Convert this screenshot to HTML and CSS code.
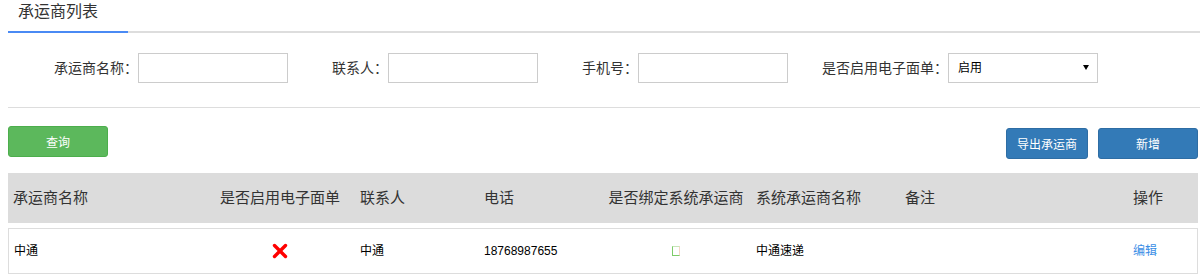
FILE: index.html
```html
<!DOCTYPE html>
<html lang="zh-CN">
<head>
<meta charset="utf-8">
<title>承运商列表</title>
<link rel="stylesheet" href="styles.css">
</head>
<body>
<div class="page">
  <div class="tabs">
    <div class="tab-active">承运商列表</div>
  </div>

  <form class="filters">
    <label class="field-label w130">承运商名称：</label>
    <input class="field-input" type="text">
    <label class="field-label w100">联系人：</label>
    <input class="field-input" type="text">
    <label class="field-label w100">手机号：</label>
    <input class="field-input" type="text">
    <label class="field-label w160">是否启用电子面单：</label>
    <div class="select-box">
      <span class="select-text">启用</span>
      <svg class="select-arrow" width="6" height="5" viewBox="0 0 6 5"><path d="M0 0H6L3 5Z" fill="#000"/></svg>
    </div>
  </form>

  <div class="divider"></div>

  <div class="toolbar">
    <button class="btn btn-green" type="button">查询</button>
    <div class="toolbar-right">
      <button class="btn btn-blue btn-export" type="button">导出承运商</button>
      <button class="btn btn-blue btn-add" type="button">新增</button>
    </div>
  </div>

  <div class="grid-table">
    <div class="grid-row grid-head">
      <div class="cell">承运商名称</div>
      <div class="cell center">是否启用电子面单</div>
      <div class="cell">联系人</div>
      <div class="cell">电话</div>
      <div class="cell center">是否绑定系统承运商</div>
      <div class="cell">系统承运商名称</div>
      <div class="cell">备注</div>
      <div class="cell">操作</div>
    </div>
    <div class="grid-row grid-body">
      <div class="cell">中通</div>
      <div class="cell center">
        <svg class="icon-x" width="16" height="16" viewBox="0 0 16 16"><path d="M2.5 2.5L13.5 13.5M13.5 2.5L2.5 13.5" stroke="#f00" stroke-width="3.4" stroke-linecap="round"/></svg>
      </div>
      <div class="cell">中通</div>
      <div class="cell num">18768987655</div>
      <div class="cell center"><span class="tofu"></span></div>
      <div class="cell">中通速递</div>
      <div class="cell"></div>
      <div class="cell"><a class="link" href="#">编辑</a></div>
    </div>
  </div>
</div>
</body>
</html>
```

FILE: styles.css
```css
* { box-sizing: border-box; }
html, body { margin: 0; padding: 0; background: #fff; }
body {
  font-family: "Liberation Sans", "Noto Sans CJK SC", sans-serif;
  color: #333;
}
.page { padding: 0 4px 0 8px; width: 1204px; }

.tabs {
  display: flex;
  border-bottom: 2px solid #dddddd;
  height: 33px;
}
.tab-active {
  width: 120px;
  height: 33px;
  padding-left: 10px;
  font-size: 16px;
  line-height: 24px;
  color: #333;
  border-bottom: 2px solid #4a8af4;
  margin-bottom: -2px;
}

.filters {
  display: flex;
  align-items: center;
  margin: 20px 0 0;
  height: 30px;
}
.field-label {
  text-align: right;
  font-size: 14px;
  line-height: 30px;
  color: #333;
  padding-right: 0;
}
.w130 { width: 130px; }
.w100 { width: 100px; }
.w160 { width: 160px; }
.field-input {
  width: 150px;
  height: 30px;
  border: 1px solid #cccccc;
  margin: 0;
  padding: 0 6px;
  font-size: 12px;
  background: #fff;
  outline: none;
}
.select-box {
  width: 150px;
  height: 30px;
  border: 1px solid #cccccc;
  display: flex;
  align-items: center;
  justify-content: space-between;
  padding: 0 8px 0 9px;
}
.select-text { font-size: 12px; color: #000; line-height: 28px; }
.select-arrow { display: block; margin-top: -1px; }

.divider {
  height: 1px;
  background: #dddddd;
  margin-top: 24px;
  width: 1192px;
}

.toolbar {
  display: flex;
  justify-content: space-between;
  align-items: flex-start;
  margin-top: 18px;
  height: 33px;
  width: 1190px;
}
.toolbar-right { display: flex; gap: 10px; margin-top: 2px; }
.btn {
  height: 31px;
  border: none;
  border-radius: 3px;
  color: #fff;
  font-family: "Liberation Sans", "Noto Sans CJK SC", sans-serif;
  font-size: 12px;
  padding: 0;
  cursor: pointer;
}
.btn-green { width: 100px; background: #5cb85c; border: 1px solid #4cae4c; }
.btn-blue { background: #337ab7; border: 1px solid #2e6da4; }
.btn-export { width: 82px; }
.btn-add { width: 100px; }

.grid-table { margin-top: 14px; width: 1190px; }
.grid-row {
  display: grid;
  grid-template-columns: 197px 150px 124px 122px 150px 149px 228px 70px;
  align-items: center;
}
.grid-head {
  height: 50px;
  background: #dcdcdc;
  font-size: 15px;
  color: #333;
}
.grid-body {
  margin-top: 5px;
  height: 46px;
  border: 1px solid #dddddd;
  grid-template-columns: 196px 150px 124px 122px 150px 149px 228px 69px;
  font-size: 12px;
  color: #000;
}
.cell {
  padding-left: 5px;
  white-space: nowrap;
  line-height: 20px;
}
.cell.center { text-align: center; padding-left: 0; display: flex; justify-content: center; align-items: center; }
.num { font-size: 12px; }
.icon-x { display: block; }
.tofu {
  display: block;
  width: 8px;
  height: 10px;
  border: 1px solid #7ccc6a;
  border-right-color: #f5d7c8;
  border-top-color: #c7e6b8;
}
.link { color: #3a8ee6; text-decoration: none; }
```
